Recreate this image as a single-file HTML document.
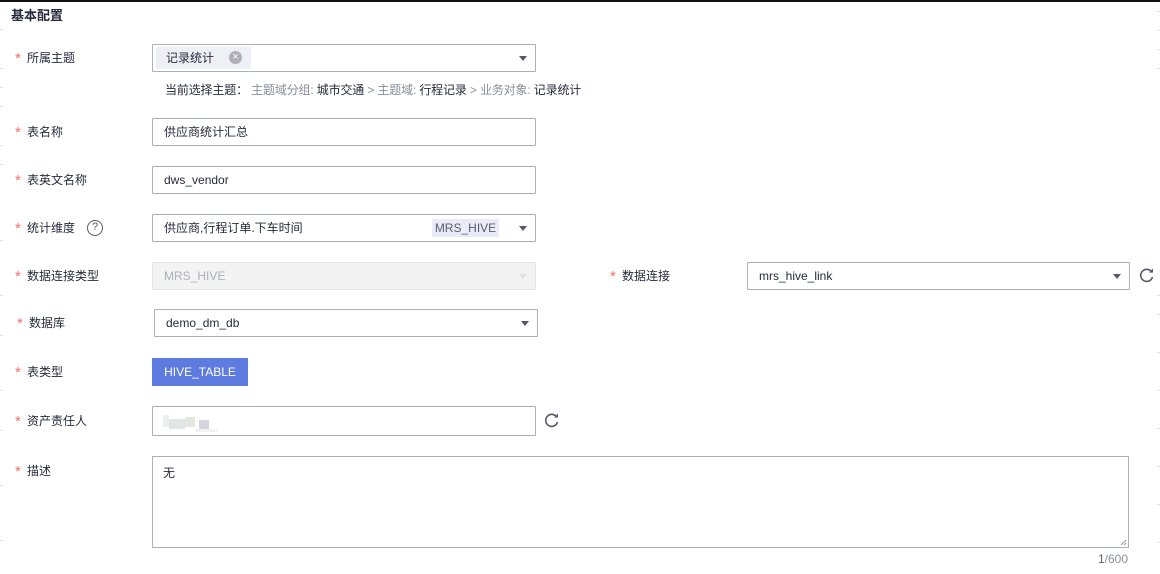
<!DOCTYPE html>
<html><head><meta charset="utf-8"><style>
*{box-sizing:border-box;margin:0;padding:0}
body{width:1160px;height:574px;background:#fff;position:relative;overflow:hidden;font-family:"Liberation Sans","Noto Sans CJK SC",sans-serif;font-size:12px;color:#252b3a}
.a{position:absolute}
.lbl{position:absolute;font-size:12px;color:#252b3a;line-height:16px}
.lbl b{color:#f66f6a;font-weight:normal;font-size:15px;display:inline-block;width:12px;vertical-align:top;line-height:18px}
.box{position:absolute;border:1px solid #adb0b8;background:#fff;border-radius:1px;height:28px;line-height:27px;padding-left:11px}
.arr{position:absolute;right:8px;top:11px;width:0;height:0;border-left:4px solid transparent;border-right:4px solid transparent;border-top:5px solid #555a65}
.tick{position:absolute;width:3px;height:1px;background:#dfe1e6}
</style></head><body>
<div class="a" style="left:0;top:0;width:1160px;height:2px;background:#111"></div>
<div class="a" style="left:11px;top:7px;font-size:13px;font-weight:bold;line-height:18px">基本配置</div>

<div class="lbl" style="left:15px;top:50px"><b>*</b>所属主题</div>
<div class="box" style="left:152px;top:44px;width:384px;padding-left:3px">
<div class="a" style="left:3px;top:2px;width:95px;height:22px;background:#eef0f5;border-radius:2px;line-height:22px;padding-left:10px">记录统计
<span class="a" style="left:73px;top:4px;width:13px;height:13px;border-radius:7px;background:#adb0b8;color:#fff;font-size:11px;line-height:13px;text-align:center">×</span></div>
<div class="arr"></div></div>
<div class="a" style="left:165px;top:82px;line-height:16px;font-size:12px;letter-spacing:-0.15px">当前选择主题：&nbsp;<span style="color:#8a8e99">主题域分组:</span> 城市交通 <span style="color:#8a8e99">&gt; 主题域:</span> 行程记录 <span style="color:#8a8e99">&gt; 业务对象:</span> 记录统计</div>

<div class="lbl" style="left:15px;top:124px"><b>*</b>表名称</div>
<div class="box" style="left:152px;top:118px;width:384px">供应商统计汇总</div>

<div class="lbl" style="left:15px;top:172px"><b>*</b>表英文名称</div>
<div class="box" style="left:152px;top:166px;width:384px">dws_vendor</div>

<div class="lbl" style="left:15px;top:220px"><b>*</b>统计维度</div>
<div class="a" style="left:87px;top:220px;width:16px;height:16px;border:1.5px solid #555a65;border-radius:50%;text-align:center;font-size:11px;line-height:13px;color:#555a65">?</div>
<div class="box" style="left:152px;top:214px;width:384px">供应商,行程订单.下车时间
<div class="a" style="left:279px;top:4px;width:67px;height:18px;background:#e9ecf8;line-height:18px;text-align:center;color:#575d6c">MRS_HIVE</div>
<div class="arr"></div></div>

<div class="lbl" style="left:15px;top:268px"><b>*</b>数据连接类型</div>
<div class="box" style="left:152px;top:262px;width:384px;background:#f3f3f3;border-color:#e3e4e6;color:#adb0b8">MRS_HIVE<div class="arr" style="border-top-color:#dfe1e6"></div></div>

<div class="lbl" style="left:610px;top:268px"><b>*</b>数据连接</div>
<div class="box" style="left:747px;top:262px;width:383px">mrs_hive_link<div class="arr"></div></div>
<svg class="a" style="left:1139px;top:267px" width="16" height="16" viewBox="0 0 16 16"><path d="M13 5.5A6 6 0 1 0 13.5 10" fill="none" stroke="#555a65" stroke-width="1.6"/><path d="M10 5.5h4V1.5z" fill="#555a65"/></svg>

<div class="lbl" style="left:17px;top:315px"><b>*</b>数据库</div>
<div class="box" style="left:154px;top:309px;width:384px">demo_dm_db<div class="arr"></div></div>

<div class="lbl" style="left:15px;top:364px"><b>*</b>表类型</div>
<div class="a" style="left:152px;top:358px;width:96px;height:28px;background:#5e7ce0;color:#fff;text-align:center;line-height:28px">HIVE_TABLE</div>

<div class="lbl" style="left:15px;top:413px"><b>*</b>资产责任人</div>
<div class="box" style="left:152px;top:406px;width:384px;height:30px">
<div class="a" style="left:10px;top:8px;width:6px;height:12px;background:#eceef0"></div>
<div class="a" style="left:16px;top:12px;width:16px;height:10px;background:#e3e4e7"></div>
<div class="a" style="left:32px;top:10px;width:10px;height:10px;background:#e5e6e2"></div>
<div class="a" style="left:46px;top:13px;width:10px;height:9px;background:#d5d6dc"></div>
<div class="a" style="left:42px;top:22px;width:22px;height:3px;background:#f2f2f4"></div>
</div>
<svg class="a" style="left:544px;top:412px" width="16" height="16" viewBox="0 0 16 16"><path d="M13 5.5A6 6 0 1 0 13.5 10" fill="none" stroke="#555a65" stroke-width="1.6"/><path d="M10 5.5h4V1.5z" fill="#555a65"/></svg>

<div class="lbl" style="left:15px;top:463px"><b>*</b>描述</div>
<div class="a" style="left:152px;top:456px;width:977px;height:92px;border:1px solid #adb0b8;padding:7px 10px">无
<svg class="a" style="right:1px;bottom:1px" width="7" height="7"><path d="M1 6L6 1M4 6L6 4" stroke="#999" stroke-width="1"/></svg></div>
<div class="a" style="left:1090px;top:551px;width:38px;text-align:right;color:#8a8e99;line-height:16px"><span style="color:#575d6c">1</span>/600</div>

<div class="tick" style="left:0;top:29px"></div><div class="tick" style="left:0;top:68px"></div><div class="tick" style="left:0;top:87px"></div>
<div class="tick" style="left:0;top:106px"></div><div class="tick" style="left:0;top:145px"></div><div class="tick" style="left:0;top:164px"></div>
<div class="tick" style="left:0;top:240px"></div><div class="tick" style="left:0;top:295px"></div><div class="tick" style="left:0;top:335px"></div>
<div class="tick" style="left:0;top:390px"></div><div class="tick" style="left:0;top:430px"></div><div class="tick" style="left:0;top:485px"></div><div class="tick" style="left:0;top:540px"></div>
<div class="tick" style="left:1157px;top:11px"></div><div class="tick" style="left:1157px;top:30px"></div><div class="tick" style="left:1157px;top:49px"></div><div class="tick" style="left:1157px;top:68px"></div>
<div class="tick" style="left:1157px;top:295px"></div><div class="tick" style="left:1157px;top:314px"></div><div class="tick" style="left:1157px;top:352px"></div><div class="tick" style="left:1157px;top:390px"></div><div class="tick" style="left:1157px;top:428px"></div><div class="tick" style="left:1157px;top:466px"></div><div class="tick" style="left:1157px;top:504px"></div><div class="tick" style="left:1157px;top:542px"></div>
</body></html>
